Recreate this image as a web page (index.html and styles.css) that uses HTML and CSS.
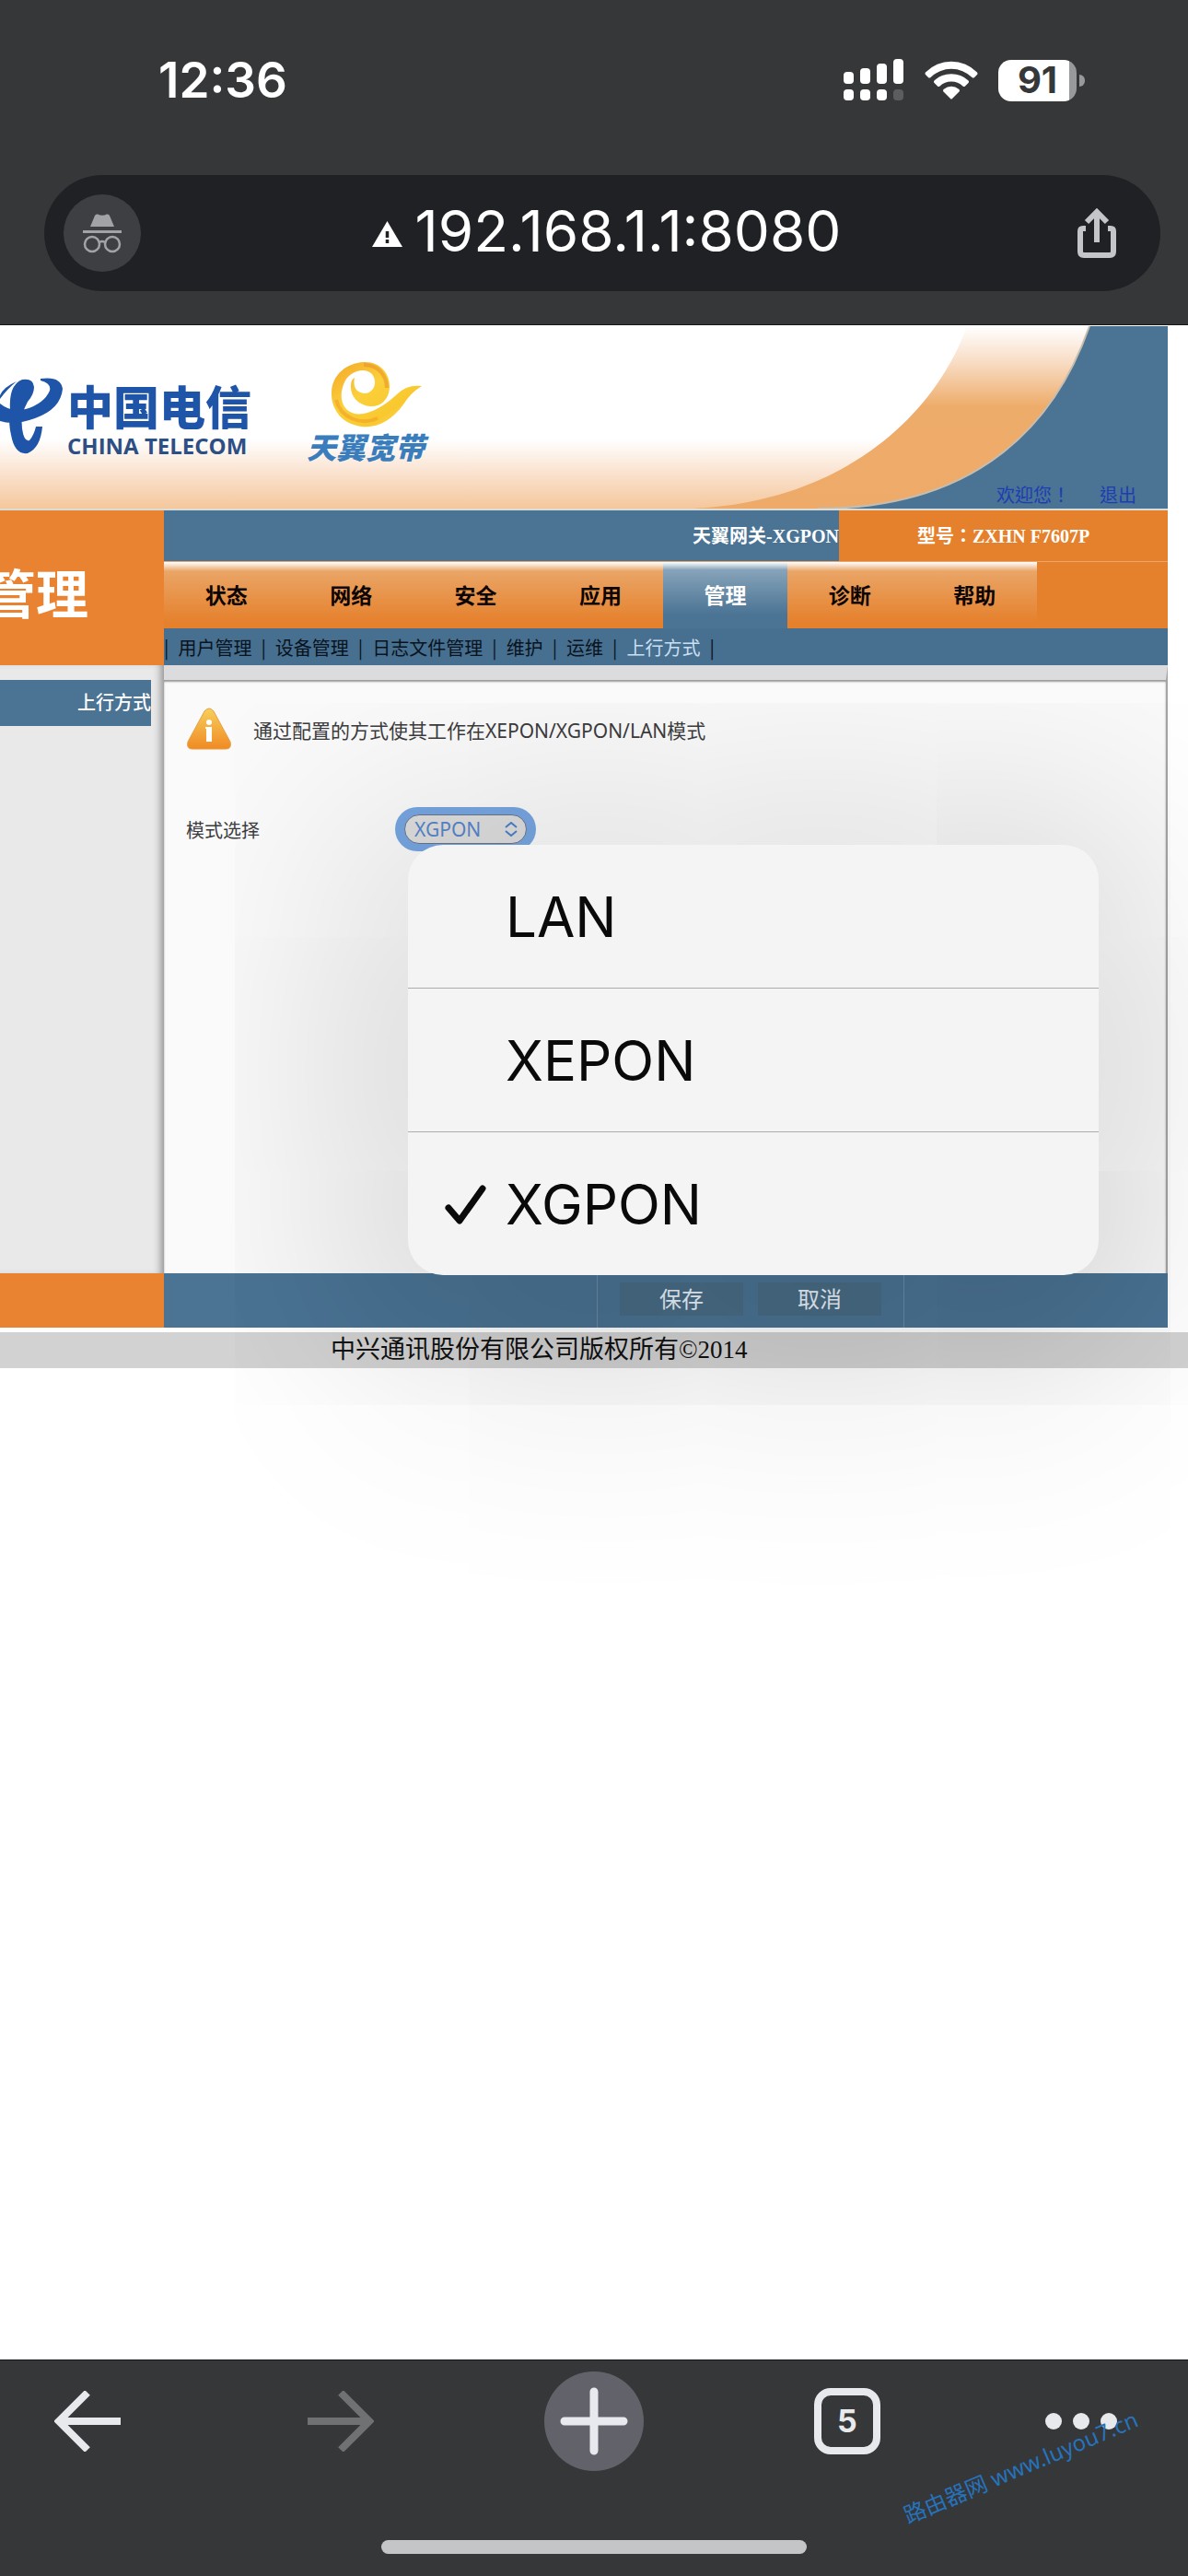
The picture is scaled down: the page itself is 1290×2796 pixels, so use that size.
FILE: index.html
```html
<!DOCTYPE html>
<html lang="zh-CN">
<head>
  <meta charset="UTF-8">
  <meta name="viewport" content="width=device-width, initial-scale=1.0">
  <title>天翼网关-XGPON</title>
  <link rel="stylesheet" href="styles.css">
</head>
<body>
  <header class="browser-top">
    <div class="status">
      <span class="time">12:36</span>
      <div class="status-icons">
        <svg width="66" height="46" viewBox="0 0 66 46" fill="#fff">
          <rect x="0" y="14" width="11" height="13" rx="4"/>
          <rect x="18" y="10" width="11" height="17" rx="4"/>
          <rect x="36" y="5" width="11" height="22" rx="4"/>
          <rect x="54" y="0" width="11" height="27" rx="4"/>
          <rect x="0" y="33" width="11" height="12" rx="4"/>
          <rect x="18" y="33" width="11" height="12" rx="4"/>
          <rect x="36" y="33" width="11" height="12" rx="4"/>
          <rect x="54" y="33" width="11" height="12" rx="4" fill="#5c5d5e"/>
        </svg>
        <svg width="58" height="46" viewBox="0 0 58 46" fill="#fff">
          <path d="M1 14.500A39 39 0 0 1 57 14.500Q58 16 57 17L54 20Q53 21 51.500 20A32 32 0 0 0 6.500 20Q5 21 4 20L1 17Q0 16 1 14.500Z"/>
          <path d="M10.500 23.500A27 27 0 0 1 47.500 23.500Q48.500 24.500 47.500 26L44 29.500Q43 30.500 41.500 29.500A18 18 0 0 0 16.500 29.500Q15 30.500 14 29.500L10.500 26Q9.500 24.500 10.500 23.500Z"/>
          <path d="M20.500 33Q29 26.500 37.500 33Q38.500 34 37.500 35.500L30 43Q29 44 28 43L20.500 35.500Q19.500 34 20.500 33Z"/>
        </svg>
        <div class="battery"><span class="charge">91</span></div>
      </div>
    </div>
    <div class="address-bar">
      <button class="incognito" aria-label="Incognito">
        <svg width="42" height="44" viewBox="0 0 42 44">
          <path d="M8 15L13 3Q14 1 16 1.500Q21 4 26 1.500Q28 1 29 3L34 15Z" fill="#a2a3a7"/>
          <rect y="19" width="42" height="3" fill="#a2a3a7"/>
          <g fill="none" stroke="#a2a3a7" stroke-width="2.500">
            <circle cx="10" cy="34" r="8"/>
            <circle cx="32" cy="34" r="8"/>
            <path d="M18 32Q21 30 24 32"/>
          </g>
        </svg>
      </button>
      <div class="url">
        <svg width="33" height="28" viewBox="0 0 33 28">
          <path d="M16.500 0L33 28H0Z" fill="#fff"/>
          <path d="M16.500 11V18M16.500 20V24" stroke="#202124" stroke-width="3.500"/>
        </svg>
        <span>192.168.1.1:8080</span>
      </div>
      <button class="share" aria-label="Share">
        <svg width="42" height="54" viewBox="0 0 42 54" fill="none" stroke="#c4c5c8" stroke-width="6">
          <path d="M9 22H6Q3 22 3 25V47Q3 51 7 51H35Q39 51 39 47V25Q39 22 36 22H33"/>
          <path d="M21 37V5M10 15L21 4L32 15"/>
        </svg>
      </button>
    </div>
  </header>

  <main class="router">
    <div class="banner">
      <svg class="curve" viewBox="0 0 520 198" width="520" height="198">
        <defs>
          <linearGradient id="sweep" x1="0" y1="0" x2="0" y2="1">
            <stop offset="0" stop-color="#fff"/>
            <stop offset="0.200" stop-color="#f8dcc4"/>
            <stop offset="0.440" stop-color="#eeac6a"/>
            <stop offset="1" stop-color="#eeaa68"/>
          </linearGradient>
        </defs>
        <path d="M302 0C268 95 170 190 5 198H520V0Z" fill="url(#sweep)"/>
        <path d="M435 0C400 100 320 198 140 198H520V0Z" fill="#4a7394"/>
        <path d="M435 0C400 100 320 198 140 198" fill="none" stroke="#c5bdb0" stroke-width="2"/>
      </svg>
      <div class="telecom">
        <svg width="68" height="84" viewBox="0 0 68 84" fill="#1f55a8">
          <path d="M11 36Q9 8 24 2Q36 0 37 10Q37 18 30 26Q22 40 24 55Q26 70 32 68Q37 62 39 53H46Q44 76 30 82Q16 84 12 62Q9 50 11 36Z"/>
          <path d="M0 28Q12 38 28 34Q48 28 54 14Q56 6 44 3V1Q66 -2 68 12Q66 34 38 44Q16 52 0 47Z"/>
          <path d="M0 19Q4 10 18 4Q8 12 0 23Z"/>
        </svg>
        <div class="telecom-name">
          <strong>中国电信</strong>
          <span>CHINA TELECOM</span>
        </div>
      </div>
      <div class="tianyi">
        <svg width="100" height="72" viewBox="0 0 100 72">
          <defs>
            <linearGradient id="gold" x1="0" y1="0" x2="1" y2="1">
              <stop offset="0" stop-color="#f4a52a"/>
              <stop offset="0.400" stop-color="#fbd03a"/>
              <stop offset="0.700" stop-color="#f9c82f"/>
              <stop offset="1" stop-color="#fde26a"/>
            </linearGradient>
          </defs>
          <path d="M37 1C55 0 66 14 65 29C64 43 54 50 44 49C31 48 22 38 23 26Q23 20 27 18Q24 34 39 35C49 33 52 22 46 14C38 6 23 11 17 21C9 36 12 53 27 57C42 60 60 48 73 36Q84 25 100 27Q88 34 80 47C68 64 51 73 35 71C15 69 1 54 2 33C3 15 18 2 37 1Z" fill="url(#gold)"/>
          <path d="M37 4C53 4 62 16 62 29" fill="none" stroke="#e9952a" stroke-width="4" opacity="0.600"/>
          <path d="M7 42C12 62 34 70 52 62" fill="none" stroke="#f0a024" stroke-width="4" opacity="0.600"/>
        </svg>
        <strong>天翼宽带</strong>
      </div>
      <div class="welcome" lang="zh-TW">
        <span>欢迎您！</span>
        <a href="#">退出</a>
      </div>
    </div>

    <div class="head">
      <h1 class="section-title">管理</h1>
      <div class="head-right">
        <div class="model-row" lang="zh-TW">
          <span class="gateway">天翼网关-XGPON</span>
          <span class="model">型号：ZXHN F7607P</span>
        </div>
        <nav class="tabs">
          <a href="#">状态</a>
          <a href="#">网络</a>
          <a href="#">安全</a>
          <a href="#">应用</a>
          <a href="#" class="active">管理</a>
          <a href="#">诊断</a>
          <a href="#">帮助</a>
        </nav>
        <nav class="subnav">
          <span>|</span><a href="#">用户管理</a>
          <span>|</span><a href="#">设备管理</a>
          <span>|</span><a href="#">日志文件管理</a>
          <span>|</span><a href="#">维护</a>
          <span>|</span><a href="#">运维</a>
          <span>|</span><a href="#" class="active">上行方式</a>
          <span>|</span>
        </nav>
      </div>
    </div>

    <div class="body-row">
      <aside class="sidebar">
        <a href="#">上行方式</a>
      </aside>
      <section class="content">
        <div class="tip">
          <svg width="50" height="48" viewBox="0 0 50 48">
            <defs>
              <linearGradient id="warn" x1="0" y1="0" x2="0" y2="1">
                <stop offset="0" stop-color="#f7cf5a"/>
                <stop offset="1" stop-color="#f08a24"/>
              </linearGradient>
            </defs>
            <path d="M20 4Q25 -2 30 4L48 37Q50 45 43 45H7Q0 45 2 37Z" fill="url(#warn)" stroke="#e6a04a"/>
            <circle cx="25" cy="16" r="3" fill="#fff"/>
            <path d="M22 21H28V37H22V23H21V21Z" fill="#fff"/>
          </svg>
          <p>通过配置的方式使其工作在XEPON/XGPON/LAN模式</p>
        </div>
        <div class="field">
          <label for="mode">模式选择</label>
          <div class="select-wrap">
            <select id="mode">
              <option>LAN</option>
              <option>XEPON</option>
              <option selected>XGPON</option>
            </select>
            <svg class="caret" width="14" height="16" viewBox="0 0 14 16" fill="none" stroke="#4a80c8" stroke-width="2">
              <path d="M1 6L7 1L13 6M1 10L7 15L13 10"/>
            </svg>
            <ul class="popup">
              <li><button>LAN</button></li>
              <li><button>XEPON</button></li>
              <li><button>
                <svg class="check" width="46" height="46" viewBox="0 0 46 46" fill="none" stroke="#0a0a0a" stroke-width="7" stroke-linecap="round" stroke-linejoin="round">
                  <path d="M4 26L16 40L41 5"/>
                </svg>XGPON</button></li>
            </ul>
          </div>
        </div>
      </section>
    </div>

    <div class="action-row">
      <div class="action-left"></div>
      <div class="actions">
        <div class="buttons">
          <button>保存</button>
          <button>取消</button>
        </div>
      </div>
    </div>
    <footer class="copyright">中兴通讯股份有限公司版权所有©2014</footer>
  </main>

  <div class="browser-bottom">
    <div class="toolbar">
      <button aria-label="Back">
        <svg width="72" height="66" viewBox="0 0 72 66" fill="none" stroke="#e8e9ec" stroke-width="8">
          <path d="M72 33H6M36 2L5 33L36 64"/>
        </svg>
      </button>
      <button aria-label="Forward">
        <svg width="72" height="66" viewBox="0 0 72 66" fill="none" stroke="#707172" stroke-width="8">
          <path d="M0 33H66M36 2L67 33L36 64"/>
        </svg>
      </button>
      <button aria-label="New tab">
        <svg width="108" height="108" viewBox="0 0 108 108">
          <circle cx="54" cy="54" r="54" fill="#62636a"/>
          <path d="M54 22V86M22 54H86" stroke="#e8e9ee" stroke-width="9" stroke-linecap="round"/>
        </svg>
      </button>
      <button aria-label="Tabs"><span class="tab-count">5</span></button>
      <button aria-label="More" class="more">
        <svg width="78" height="20" viewBox="0 0 78 20" fill="#e8e9ec">
          <circle cx="9" cy="10" r="9"/>
          <circle cx="39" cy="10" r="9"/>
          <circle cx="69" cy="10" r="9"/>
        </svg>
      </button>
    </div>
    <div class="home-bar"></div>
    <span class="watermark">路由器网 www.luyou7.cn</span>
  </div>
</body>
</html>
```
FILE: styles.css
```css
* {
  box-sizing: border-box;
}

body {
  margin: 0;
  min-height: 100vh;
  display: flex;
  flex-direction: column;
  background: #fff;
  font-family: "Noto Sans", "Noto Sans CJK SC", sans-serif;
  font-size: 20px;
  overflow-x: hidden;
}

a {
  color: inherit;
  text-decoration: none;
}

button {
  border: none;
  padding: 0;
  background: none;
  font: inherit;
  color: inherit;
  cursor: pointer;
}

svg {
  display: block;
  flex-shrink: 0;
}

/* Browser top */
.browser-top {
  position: relative;
  z-index: 2;
  background: #363739;
  border-bottom: 1px solid #161617;
  padding: 48px 30px 36px 48px;
  font-family: Inter, sans-serif;
  color: #fff;
}

.status {
  display: flex;
  justify-content: space-between;
  align-items: center;
  height: 78px;
  padding: 0 82px 0 124px;
}

.time {
  font-size: 53px;
  font-weight: 600;
}

.status-icons {
  display: flex;
  align-items: center;
  gap: 22px;
}

.battery {
  position: relative;
  width: 85px;
  height: 45px;
  border-radius: 14px;
  background: linear-gradient(to right, #fff 91%, #98999a 91%);
  color: #363739;
  text-align: center;
  font-size: 40px;
  font-weight: 700;
  line-height: 43px;
  margin-right: 9px;
}

.battery::after {
  content: "";
  position: absolute;
  left: 88px;
  top: 16px;
  width: 6px;
  height: 13px;
  border-radius: 0 6px 6px 0;
  background: #98999a;
}

.address-bar {
  display: flex;
  align-items: center;
  justify-content: space-between;
  height: 126px;
  margin-top: 64px;
  padding: 0 48px 0 21px;
  border-radius: 63px;
  background: #202124;
}

.incognito {
  display: flex;
  align-items: center;
  justify-content: center;
  width: 84px;
  height: 84px;
  border-radius: 50%;
  background: #3e3f42;
}

.url {
  display: flex;
  align-items: center;
  gap: 14px;
  padding: 0 6px 4px 0;
  font-size: 62px;
  line-height: 76px;
}

.url svg {
  margin-top: 6px;
}

/* Router page */
.router {
  flex: 1;
  padding-top: 1px;
}

.banner {
  position: relative;
  display: flex;
  align-items: flex-start;
  height: 200px;
  margin-right: 22px;
  border-bottom: 2px solid #dcdcd6;
  background: linear-gradient(#fff 62%, #fae3d0 80%, #f5c79c);
}

.curve {
  position: absolute;
  right: 0;
  top: 0;
}

.telecom {
  display: flex;
  padding-top: 56px;
}

.telecom-name {
  display: flex;
  flex-direction: column;
  padding-left: 5px;
  color: #1f55a8;
}

.telecom-name strong {
  font-family: "Noto Sans CJK SC", sans-serif;
  font-size: 50px;
  font-weight: 900;
  line-height: 58px;
}

.telecom-name span {
  font-family: "Open Sans", sans-serif;
  font-size: 24px;
  font-weight: 700;
  line-height: 32px;
  color: #2c4f85;
}

.tianyi {
  display: flex;
  flex-direction: column;
  align-items: center;
  padding: 38px 0 0 60px;
}

.tianyi svg {
  margin-left: 22px;
}

.tianyi strong {
  font-family: "Noto Sans CJK SC", sans-serif;
  font-size: 32px;
  font-style: italic;
  font-weight: 900;
  line-height: 40px;
  color: #3a7dbd;
}

.welcome {
  position: relative;
  display: flex;
  gap: 32px;
  align-self: flex-end;
  margin-left: auto;
  padding-right: 34px;
  font-family: "Noto Sans CJK TC", sans-serif;
  line-height: 30px;
  color: #1d3db2;
}

.head,
.body-row,
.action-row {
  display: grid;
  grid-template-columns: 178px 1fr;
  margin-right: 22px;
}

.section-title {
  display: flex;
  align-items: center;
  justify-content: flex-end;
  margin: 0;
  padding: 12px 82px 0 0;
  overflow: hidden;
  white-space: nowrap;
  background: #ea8331;
  color: #fff;
  font-size: 57px;
  font-weight: 700;
  line-height: 60px;
}

.model-row {
  display: flex;
  height: 55px;
  background: #4a7394;
  color: #fff;
  font-family: "Liberation Serif", "Noto Sans CJK TC", serif;
  font-weight: 700;
  line-height: 56px;
}

.gateway {
  flex: 1;
  text-align: right;
}

.model {
  width: 357px;
  text-align: center;
  background: #e5812d;
}

.tabs {
  display: grid;
  grid-template-columns: repeat(7, 1fr);
  height: 73px;
  padding-right: 142px;
  background: #e5812d;
  border-top: 1px solid #eba568;
}

.tabs a {
  display: flex;
  align-items: center;
  justify-content: center;
  padding-bottom: 2px;
  background: linear-gradient(#fff, #eaa566 14%, #e5812d 90%);
  color: #0c0502;
  font-size: 23px;
  font-weight: 700;
}

.tabs .active {
  background: linear-gradient(#fff, #86a3b9 12%, #4a7394 80%);
  color: #fff;
}

.subnav {
  display: flex;
  align-items: center;
  gap: 10px;
  height: 40px;
  background: #476f8f;
  color: #08131e;
  font-family: "Noto Sans CJK SC", sans-serif;
}

.subnav .active {
  color: #c9dff3;
}

.sidebar {
  padding: 16px 14px 0 0;
  background: #e9e9ea;
  box-shadow: inset -8px 0 8px -5px #8c8c8c;
}

.sidebar a {
  display: block;
  height: 50px;
  background: #4a7394;
  color: #fff;
  font-weight: 500;
  line-height: 50px;
  text-align: right;
}

.content {
  min-height: 660px;
  padding: 30px 24px 0;
  border-top: 16px solid #dcdcde;
  border-right: 2px solid #a5a5a8;
  background: #fafafa;
  box-shadow: inset 0 2px 2px #9a9a9a;
  color: #3c3c3e;
}

.tip {
  display: flex;
  align-items: center;
  gap: 23px;
  height: 48px;
  font-size: 21px;
}

.tip p {
  margin: 0;
}

.field {
  display: flex;
  align-items: center;
  margin-top: 60px;
}

.field label {
  width: 227px;
}

.select-wrap {
  position: relative;
  padding: 8px 10px;
  border-radius: 24px;
  background: #78a6e2;
}

.select-wrap select {
  display: block;
  appearance: none;
  width: 133px;
  height: 32px;
  padding: 0 10px;
  border: 1px solid #67768c;
  border-radius: 16px;
  background: #dededf;
  color: #5686cb;
  font-family: "Noto Sans", sans-serif;
  font-size: 21px;
}

.caret {
  position: absolute;
  right: 20px;
  top: 16px;
}

.popup {
  position: absolute;
  z-index: 1;
  left: 14px;
  top: 41px;
  width: 750px;
  margin: 0;
  padding: 0;
  list-style: none;
  border-radius: 38px;
  background: #f4f4f5;
  box-shadow: 0 40px 280px 50px rgba(0, 0, 0, 0.180);
  font-family: Inter, sans-serif;
  font-size: 60px;
  color: #0a0a0a;
}

.popup li + li {
  border-top: 1px solid #adadae;
}

.popup button {
  position: relative;
  display: block;
  width: 100%;
  height: 155px;
  padding-left: 106px;
  text-align: left;
}

.check {
  position: absolute;
  left: 40px;
  top: 56px;
}

.action-left {
  background: #ea8331;
}

.actions {
  display: flex;
  height: 59px;
  padding-left: 470px;
  background: #4a7394;
}

.buttons {
  display: flex;
  align-items: center;
  gap: 16px;
  padding: 0 24px 4px;
  border: solid #6a8ba5;
  border-width: 0 1px;
}

.buttons button {
  width: 134px;
  height: 36px;
  background: #486c85;
  color: #e9f2fa;
  font-size: 24px;
  line-height: 36px;
}

.copyright {
  height: 39px;
  margin-top: 5px;
  padding-left: 359px;
  background: #d2d2d2;
  color: #111;
  font-family: "Liberation Serif", "Noto Sans CJK SC", serif;
  font-size: 27px;
  line-height: 39px;
}

/* Browser bottom */
.browser-bottom {
  position: relative;
  z-index: 2;
  height: 235px;
  padding-top: 12px;
  overflow: hidden;
  border-top: 1px solid #161617;
  background: #363739;
}

.toolbar {
  display: grid;
  grid-template-columns: repeat(5, 1fr);
  height: 108px;
  margin: 0 -42px;
}

.toolbar button {
  display: flex;
  align-items: center;
  justify-content: center;
}

.toolbar .more {
  padding-right: 42px;
}

.tab-count {
  width: 72px;
  height: 72px;
  border: 8px solid #e8e9ec;
  border-radius: 18px;
  color: #e8e9ec;
  font-family: Inter, sans-serif;
  font-size: 34px;
  font-weight: 700;
  line-height: 56px;
}

.home-bar {
  width: 462px;
  height: 15px;
  margin: 75px auto 0;
  border-radius: 8px;
  background: #c4c5c7;
}

.watermark {
  position: absolute;
  right: 46px;
  bottom: 102px;
  color: #2672bb;
  font-size: 24px;
  white-space: nowrap;
  transform: rotate(-23deg);
}
```
